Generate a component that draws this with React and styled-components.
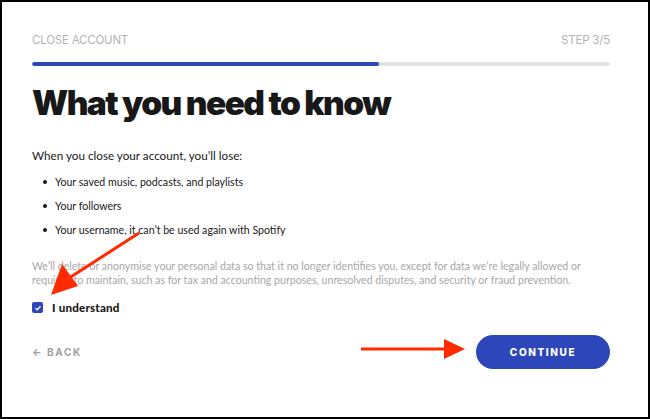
import React from "react";
import styled, { createGlobalStyle } from "styled-components";

const Global = createGlobalStyle`
  html, body { margin: 0; padding: 0; background: #fff; }
  body { font-family: "Lato", "Liberation Sans", sans-serif; }
`;

const Frame = styled.div`
  position: relative;
  box-sizing: border-box;
  width: 650px;
  height: 419px;
  border: 2px solid #000;
  padding: 31px 38px 0 30px;
  display: flex;
  flex-direction: column;
  overflow: hidden;
`;

const TopRow = styled.div`
  display: flex;
  justify-content: space-between;
  align-items: center;
  font-family: "Inter", sans-serif;
  font-size: 11.5px;
  line-height: 14px;
  color: #b3b3b3;
  letter-spacing: -0.2px;
`;

const Track = styled.div`
  margin-top: 15px;
  height: 4px;
  border-radius: 2px;
  background: #e2e2e2;
  overflow: hidden;
`;

const Fill = styled.div`
  height: 100%;
  border-radius: 2px;
  background: #2d46b9;
`;

const Heading = styled.h1`
  margin: 17px 0 0 0;
  font-family: "Inter", sans-serif;
  font-weight: 900;
  font-size: 33.5px;
  line-height: 40px;
  letter-spacing: -1.6px;
  color: #181818;
`;

const Intro = styled.p`
  margin: 25px 0 0 0;
  font-size: 11.7px;
  line-height: 14px;
  color: #181818;
`;

const List = styled.ul`
  margin: 13px 0 0 0;
  padding: 0;
  list-style: none;
  display: flex;
  flex-direction: column;
  gap: 10px;
`;

const Item = styled.li`
  display: flex;
  align-items: center;
  font-size: 10.6px;
  line-height: 14px;
  color: #181818;
  &::before {
    content: "";
    width: 4px;
    height: 4px;
    border-radius: 50%;
    background: #181818;
    margin: 0 8px 0 11px;
  }
`;

const Fine = styled.p`
  margin: 22px 0 0 0;
  font-size: 10.6px;
  line-height: 14px;
  color: #a7a7a7;
`;

const CheckRow = styled.label`
  margin-top: 14px;
  display: flex;
  align-items: center;
  gap: 9px;
  font-size: 11.6px;
  font-weight: 900;
  color: #181818;
  letter-spacing: 0.2px;
`;

const Box = styled.span`
  width: 11px;
  height: 11px;
  border-radius: 2px;
  background: #2d46b9;
  display: flex;
  align-items: center;
  justify-content: center;
`;

const Footer = styled.div`
  margin-top: 21px;
  display: flex;
  justify-content: space-between;
  align-items: center;
`;

const Back = styled.span`
  font-family: "Inter", sans-serif;
  font-size: 10px;
  font-weight: 700;
  letter-spacing: 1.6px;
  color: #a0a0a0;
`;

const Continue = styled.button`
  width: 134px;
  height: 34px;
  border: none;
  border-radius: 17px;
  background: #2d46b9;
  color: #fff;
  font-family: "Inter", sans-serif;
  font-size: 10px;
  font-weight: 800;
  letter-spacing: 1.6px;
`;

const Overlay = styled.svg`
  position: absolute;
  left: -2px;
  top: -2px;
  pointer-events: none;
`;

export default function App() {
  return (
    <>
      <Global />
      <Frame>
        <TopRow>
          <span>CLOSE ACCOUNT</span>
          <span>STEP 3/5</span>
        </TopRow>
        <Track>
          <Fill style={{ width: "60%" }} />
        </Track>
        <Heading>What you need to know</Heading>
        <Intro>When you close your account, you’ll lose:</Intro>
        <List>
          <Item>Your saved music, podcasts, and playlists</Item>
          <Item>Your followers</Item>
          <Item>Your username, it can’t be used again with Spotify</Item>
        </List>
        <Fine>
          We’ll delete or anonymise your personal data so that it no longer identifies you, except for data we’re legally allowed or
          required to maintain, such as for tax and accounting purposes, unresolved disputes, and security or fraud prevention.
        </Fine>
        <CheckRow>
          <Box>
            <svg width="8" height="8" viewBox="0 0 8 8">
              <path d="M1.5 4.2 L3.2 5.8 L6.5 2.2" fill="none" stroke="#fff" strokeWidth="1.3" />
            </svg>
          </Box>
          I understand
        </CheckRow>
        <Footer>
          <Back>← BACK</Back>
          <Continue>CONTINUE</Continue>
        </Footer>
        <Overlay width="650" height="419" viewBox="0 0 650 419">
          <line x1="139" y1="233" x2="66" y2="280" stroke="#ff2a00" strokeWidth="3" />
          <polygon points="51,295 78,286 62,264" fill="#ff2a00" />
          <line x1="361" y1="349" x2="446" y2="349" stroke="#ff2a00" strokeWidth="3" />
          <polygon points="444,339 465,349 444,359" fill="#ff2a00" />
        </Overlay>
      </Frame>
    </>
  );
}
